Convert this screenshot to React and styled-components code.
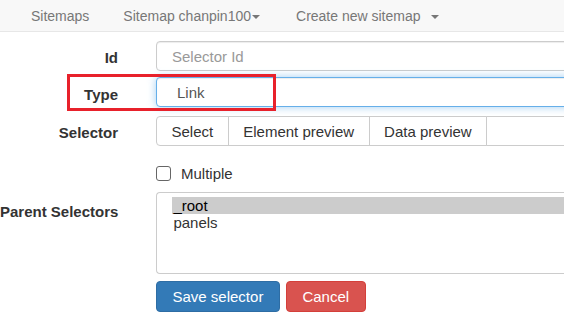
import styled, { createGlobalStyle } from "styled-components";

const GlobalStyle = createGlobalStyle`
  body {
    margin: 0;
    overflow: hidden;
    background: #fff;
    font-family: "Liberation Sans", Arial, sans-serif;
    color: #333;
  }
`;

const App = () => {
  return (
    <>
      <GlobalStyle />
      <Navbar>
        <NavItem $right={34}>Sitemaps</NavItem>
        <NavItem $right={36}>
          Sitemap chanpin100
          <Caret $left={1} />
        </NavItem>
        <NavItem>
          Create new sitemap
          <Caret $left={10} />
        </NavItem>
      </Navbar>

      <Form>
        <Row $gap={6}>
          <Label>Id</Label>
          <Control>
            <TextInput placeholder="Selector Id" />
          </Control>
        </Row>

        <Row $gap={9}>
          <Label $top={8}>Type</Label>
          <Control>
            <TypeSelect defaultValue="Link">
              <option>Link</option>
              <option>Text</option>
            </TypeSelect>
          </Control>
          <Highlight />
        </Row>

        <Row $gap={20}>
          <Label>Selector</Label>
          <Control>
            <InputGroup>
              <GroupButton $first>Select</GroupButton>
              <GroupButton>Element preview</GroupButton>
              <GroupButton>Data preview</GroupButton>
              <GroupInput />
            </InputGroup>
          </Control>
        </Row>

        <Row $gap={11}>
          <Label />
          <Control>
            <CheckLabel>
              <Checkbox type="checkbox" />
              Multiple
            </CheckLabel>
          </Control>
        </Row>

        <Row $gap={7}>
          <Label $top={10}>Parent Selectors</Label>
          <Control>
            <ListBox role="listbox">
              <ListOption $selected>_root</ListOption>
              <ListOption>panels</ListOption>
            </ListBox>
          </Control>
        </Row>

        <Row>
          <Label />
          <Control>
            <Actions>
              <ActionButton $variant="primary">Save selector</ActionButton>
              <ActionButton $variant="danger">Cancel</ActionButton>
            </Actions>
          </Control>
        </Row>
      </Form>
    </>
  );
};

const Navbar = styled.nav`
  display: flex;
  align-items: center;
  height: 31px;
  padding-left: 31px;
  background: #f8f8f8;
  border-bottom: 1px solid #e7e7e7;
`;

const NavItem = styled.a`
  display: flex;
  align-items: center;
  margin-right: ${(p) => p.$right || 0}px;
  font-size: 14px;
  color: #777;
  white-space: nowrap;
  cursor: pointer;
`;

const Caret = styled.span`
  display: inline-block;
  width: 0;
  height: 0;
  margin-left: ${(p) => p.$left}px;
  margin-top: 2px;
  border-top: 4px solid #777;
  border-left: 4px solid transparent;
  border-right: 4px solid transparent;
`;

const Form = styled.form`
  width: 820px;
  padding-top: 9px;
`;

const Row = styled.div`
  position: relative;
  display: flex;
  align-items: flex-start;
  margin-bottom: ${(p) => p.$gap || 0}px;
`;

const Label = styled.label`
  flex: 0 0 118px;
  margin-right: 38px;
  padding-top: ${(p) => p.$top || 7}px;
  font-size: 15px;
  font-weight: bold;
  line-height: 20px;
  text-align: right;
  white-space: nowrap;
  direction: rtl;
  color: #333;
`;

const Control = styled.div`
  flex: 1;
  min-width: 0;
`;

const TextInput = styled.input`
  box-sizing: border-box;
  display: block;
  width: 100%;
  height: 30px;
  padding: 0 15px;
  font-family: inherit;
  font-size: 15px;
  color: #555;
  background: #fff;
  border: 1px solid #ccc;
  border-radius: 4px;
  box-shadow: inset 0 1px 1px rgba(0, 0, 0, 0.075);
  outline: none;

  &::placeholder {
    color: #999;
  }
`;

const TypeSelect = styled.select`
  box-sizing: border-box;
  display: block;
  width: 100%;
  height: 30px;
  padding: 0 20px;
  font-family: inherit;
  font-size: 15px;
  color: #555;
  background: #fff;
  border: 1px solid #66afe9;
  border-radius: 4px;
  box-shadow: inset 0 1px 1px rgba(0, 0, 0, 0.075),
    0 0 8px rgba(102, 175, 233, 0.6);
  appearance: none;
  outline: none;
`;

const Highlight = styled.div`
  position: absolute;
  left: 67px;
  top: -3px;
  width: 209px;
  height: 37px;
  box-sizing: border-box;
  border: 3px solid #e8212b;
  pointer-events: none;
`;

const InputGroup = styled.div`
  display: flex;
  height: 30px;
`;

const GroupButton = styled.button`
  flex: none;
  box-sizing: border-box;
  height: 30px;
  padding: 0 14.5px;
  margin-left: ${(p) => (p.$first ? 0 : -1)}px;
  font-family: inherit;
  font-size: 15px;
  color: #333;
  background: #fff;
  border: 1px solid #ccc;
  border-radius: ${(p) => (p.$first ? "4px 0 0 4px" : "0")};
  cursor: pointer;
`;

const GroupInput = styled.input`
  flex: 1;
  box-sizing: border-box;
  height: 30px;
  margin-left: -1px;
  border: 1px solid #ccc;
  border-radius: 0 4px 4px 0;
  outline: none;
`;

const CheckLabel = styled.label`
  display: flex;
  align-items: center;
  height: 15px;
  font-size: 15px;
  color: #333;
`;

const Checkbox = styled.input`
  appearance: none;
  box-sizing: border-box;
  width: 15px;
  height: 15px;
  margin: 0 10px 0 0;
  background: #fff;
  border: 1px solid #666;
  border-radius: 3px;
`;

const ListBox = styled.div`
  box-sizing: border-box;
  height: 82px;
  padding: 4px 0 0 15px;
  background: #fff;
  border: 1px solid #ccc;
  border-radius: 4px 0 0 4px;
  border-right: none;
`;

const ListOption = styled.div`
  height: 17px;
  padding-left: 1px;
  font-size: 15px;
  line-height: 17px;
  color: ${(p) => (p.$selected ? "#000" : "#333")};
  background: ${(p) => (p.$selected ? "#cccccc" : "transparent")};
`;

const Actions = styled.div`
  display: flex;
  gap: 6px;
`;

const ActionButton = styled.button`
  box-sizing: border-box;
  height: 31px;
  padding: 0 15.5px;
  font-family: inherit;
  font-size: 15px;
  color: #fff;
  background: ${(p) => (p.$variant === "danger" ? "#d9534f" : "#337ab7")};
  border: 1px solid
    ${(p) => (p.$variant === "danger" ? "#d43f3a" : "#2e6da4")};
  border-radius: 4px;
  cursor: pointer;
`;

export default App;
